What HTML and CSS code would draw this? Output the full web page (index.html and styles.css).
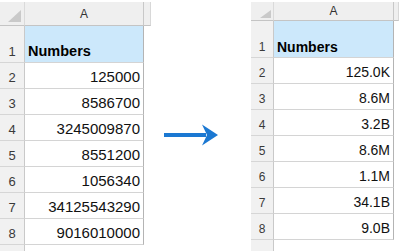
FILE: index.html
```html
<!DOCTYPE html>
<html>
<head>
<meta charset="utf-8">
<link rel="stylesheet" href="styles.css">
</head>
<body>
<div class="page">
  <div class="sheet sheet-left">
    <div class="corner"><span class="tri"></span></div>
    <div class="colhead">A</div>
    <div class="headext"></div>

    <div class="rowhead">1</div>
    <div class="cell title">Numbers</div>
    <div class="ext"></div>

    <div class="rowhead">2</div><div class="cell num">125000</div><div class="ext"></div>
    <div class="rowhead">3</div><div class="cell num">8586700</div><div class="ext"></div>
    <div class="rowhead">4</div><div class="cell num">3245009870</div><div class="ext"></div>
    <div class="rowhead">5</div><div class="cell num">8551200</div><div class="ext"></div>
    <div class="rowhead">6</div><div class="cell num">1056340</div><div class="ext"></div>
    <div class="rowhead">7</div><div class="cell num">34125543290</div><div class="ext"></div>
    <div class="rowhead">8</div><div class="cell num">9016010000</div><div class="ext"></div>

    <div class="rowhead stub"></div><div class="ext"></div><div class="ext"></div>
  </div>

  <div class="arrow-area">
    <svg class="arrow" width="60" height="30" viewBox="0 0 60 30">
      <rect x="2" y="13" width="42" height="4" fill="#1b78d2"/>
      <path d="M40 4.5 L56 15 L40 25.5 L45 15 Z" fill="#1b78d2"/>
    </svg>
  </div>

  <div class="sheet sheet-right">
    <div class="corner"><span class="tri"></span></div>
    <div class="colhead">A</div>
    <div class="headext"></div>

    <div class="rowhead">1</div>
    <div class="cell title">Numbers</div>
    <div class="ext"></div>

    <div class="rowhead">2</div><div class="cell num">125.0K</div><div class="ext"></div>
    <div class="rowhead">3</div><div class="cell num">8.6M</div><div class="ext"></div>
    <div class="rowhead">4</div><div class="cell num">3.2B</div><div class="ext"></div>
    <div class="rowhead">5</div><div class="cell num">8.6M</div><div class="ext"></div>
    <div class="rowhead">6</div><div class="cell num">1.1M</div><div class="ext"></div>
    <div class="rowhead">7</div><div class="cell num">34.1B</div><div class="ext"></div>
    <div class="rowhead">8</div><div class="cell num">9.0B</div><div class="ext"></div>

    <div class="rowhead stub"></div><div class="ext"></div><div class="ext"></div>
  </div>
</div>
</body>
</html>
```

FILE: styles.css
```css
html, body {
  margin: 0;
  padding: 0;
  background: #ffffff;
}

body {
  width: 399px;
  height: 251px;
  overflow: hidden;
  font-family: "Liberation Sans", Arial, sans-serif;
}

.page {
  display: flex;
  align-items: flex-start;
  padding-top: 2px;
}

.sheet {
  display: grid;
}

.sheet-left {
  width: 151px;
  grid-template-columns: 25px 119px 7px;
  grid-template-rows: 24px 37px repeat(7, 26px) 6px;
}

.sheet-right {
  width: 148px;
  grid-template-columns: 23px 120px 5px;
  grid-template-rows: 19px 37px repeat(7, 26px) 11px;
}

.sheet > div {
  box-sizing: border-box;
}

.corner {
  background: #efefef;
  border-right: 1px solid #dadada;
  border-bottom: 1px solid #c4c4c4;
  display: flex;
  justify-content: flex-end;
  align-items: flex-end;
  padding: 0 3px 3px 0;
}

.tri {
  display: block;
  width: 0;
  height: 0;
  border-left: 13px solid transparent;
  border-bottom: 12px solid #c9c9c9;
}

.sheet-right .tri {
  border-left-width: 11px;
  border-bottom-width: 8px;
}

.sheet-right .corner {
  padding: 0 2px 2px 0;
}

.colhead {
  background: #efefef;
  border-right: 1px solid #c8c8c8;
  border-bottom: 1px solid #c4c4c4;
  display: flex;
  align-items: center;
  justify-content: center;
  font-size: 12px;
  color: #333333;
}

.headext {
  background: #efefef;
  border-bottom: 1px solid #c4c4c4;
  border-right: 1px solid #d8d8d8;
}

.rowhead {
  background: #f1f1f1;
  border-right: 1px solid #c9c9c9;
  border-bottom: 1px solid #d6d6d6;
  display: flex;
  align-items: flex-end;
  justify-content: center;
  padding-bottom: 3px;
  font-size: 13px;
  color: #3a3a3a;
}

.sheet-right .rowhead {
  font-size: 12px;
  padding-bottom: 3px;
}

.rowhead.stub {
  border-bottom: none;
}

.cell {
  border-right: 1px solid #b4b4b4;
  border-bottom: 1px solid #d4d4d4;
  display: flex;
  align-items: flex-end;
  padding: 0 3px 3px 3px;
  font-size: 15px;
  color: #111111;
}

.sheet-right .cell {
  font-size: 14px;
  padding-bottom: 3px;
}

.cell.title {
  background: #cce8fb;
  font-weight: bold;
  justify-content: flex-start;
  padding-left: 3px;
  font-size: 14.5px;
  color: #000000;
}

.sheet-right .cell.title {
  font-size: 14px;
  padding-bottom: 2px;
}

.cell.num {
  justify-content: flex-end;
}

.ext {
  background: transparent;
}

.arrow-area {
  width: 100px;
  flex: none;
}

.arrow {
  display: block;
  margin-top: 118px;
  margin-left: 11px;
}
```
